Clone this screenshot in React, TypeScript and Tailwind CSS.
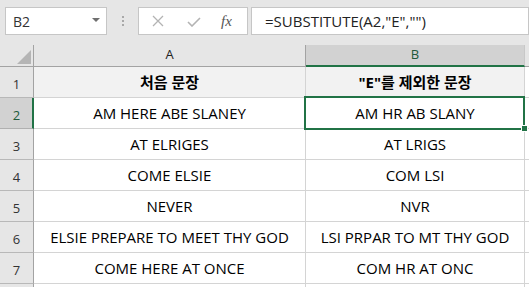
import React from 'react';

const FONT = "font-['Open_Sans','Noto_Sans_CJK_KR',sans-serif]";

type Row = { a: string; b: string };

const rows: Row[] = [
  { a: 'AM HERE ABE SLANEY', b: 'AM HR AB SLANY' },
  { a: 'AT ELRIGES', b: 'AT LRIGS' },
  { a: 'COME ELSIE', b: 'COM LSI' },
  { a: 'NEVER', b: 'NVR' },
  { a: 'ELSIE PREPARE TO MEET THY GOD', b: 'LSI PRPAR TO MT THY GOD' },
  { a: 'COME HERE AT ONCE', b: 'COM HR AT ONC' },
];

function FormulaBar() {
  return (
    <div className="flex h-[45px] items-start bg-[#e6e6e6] pt-[7px] pl-[5px]">
      <div className="flex h-[28px] w-[102px] items-center justify-between border border-[#c6c6c6] bg-white pl-[7px] pr-[6px]">
        <span className="text-[14px] text-[#333]">B2</span>
        <svg width="8" height="4" viewBox="0 0 8 4" className="mb-[2px]">
          <path d="M0 0 L8 0 L4 4 Z" fill="#6f6f6f" />
        </svg>
      </div>
      <div className="flex h-[28px] w-[31px] flex-col items-center justify-center gap-[2px]">
        <span className="h-[2px] w-[2px] bg-[#a8a8a8]" />
        <span className="h-[2px] w-[2px] bg-[#a8a8a8]" />
        <span className="h-[2px] w-[2px] bg-[#a8a8a8]" />
      </div>
      <div className="flex h-[28px] w-[110px] items-center border border-[#c6c6c6] bg-white">
        <svg width="12" height="12" viewBox="0 0 12 12" className="ml-[13px]">
          <path d="M1 1 L11 11 M11 1 L1 11" stroke="#b3b3b3" strokeWidth="1.3" />
        </svg>
        <svg width="14" height="10" viewBox="0 0 14 10" className="ml-[23px] mt-[2px]">
          <path d="M1 5 L5 9 L13 1" stroke="#b3b3b3" strokeWidth="1.6" fill="none" />
        </svg>
        <span className="ml-[20px] font-['Liberation_Serif',serif] text-[15px] italic text-[#555]">fx</span>
      </div>
      <div className="ml-[3px] flex h-[28px] flex-1 items-center border border-[#c6c6c6] bg-white pl-[13px]">
        <span className="text-[15px] text-[#222]">=SUBSTITUTE(A2,"E","")</span>
      </div>
    </div>
  );
}

function HeaderRow() {
  return (
    <div className="flex h-[22px]">
      <div className="flex w-[34px] items-end justify-end border-r border-b border-[#a3a3a3] bg-[#e6e6e6] pr-[2px] pb-[2px]">
        <svg width="14" height="14" viewBox="0 0 14 14">
          <path d="M14 0 L14 14 L0 14 Z" fill="#b5b5b5" />
        </svg>
      </div>
      <div className="flex w-[272px] items-center justify-center border-r border-b border-[#a3a3a3] bg-[#e6e6e6] pb-[2px] text-[13px] text-[#222]">
        A
      </div>
      <div className="flex w-[219px] items-center justify-center border-r border-b-2 border-r-[#c8c8c8] border-b-[#217346] bg-[#d2d2d2] pb-[1px] text-[13px] text-[#215a3a]">
        B
      </div>
      <div className="flex-1 border-b border-[#a3a3a3] bg-[#e6e6e6]" />
    </div>
  );
}

function DataRow({ n, a, b, header }: { n: number; a: string; b: string; header?: boolean }) {
  const selected = n === 2;
  const fill = header ? 'bg-[#f2f2f2]' : 'bg-white';
  const text = header ? 'text-[15px] font-bold' : 'text-[15px]';
  return (
    <div className="flex h-[31px]">
      <div
        className={
          selected
            ? 'flex w-[34px] items-end justify-center border-r-2 border-b border-r-[#217346] border-b-[#b0b0b0] bg-[#d2d2d2] pb-[3px] pl-[1px] text-[13px] text-[#215a3a]'
            : 'flex w-[34px] items-end justify-center border-r border-b border-r-[#a3a3a3] border-b-[#b8b8b8] bg-[#e6e6e6] pb-[3px] text-[13px] text-[#333]'
        }
      >
        {n}
      </div>
      <div className={`flex w-[272px] items-center justify-center border-r border-b border-[#d4d4d4] ${fill} ${text} text-black`}>
        {a}
      </div>
      <div className={`flex w-[219px] items-center justify-center border-r border-b border-[#d4d4d4] ${fill} ${text} text-black`}>
        {b}
      </div>
      <div className="flex-1 border-b border-[#d4d4d4] bg-white" />
    </div>
  );
}

export default function App() {
  return (
    <div className={`relative h-[287px] w-[529px] overflow-hidden bg-white ${FONT}`}>
      <FormulaBar />
      <HeaderRow />
      <DataRow n={1} a="처음 문장" b={'"E"를 제외한 문장'} header />
      {rows.map((r, i) => (
        <DataRow key={i} n={i + 2} a={r.a} b={r.b} />
      ))}
      <div className="flex h-[10px]">
        <div className="w-[34px] border-r border-[#a3a3a3] bg-[#e6e6e6]" />
        <div className="w-[272px] border-r border-[#d4d4d4]" />
        <div className="w-[219px] border-r border-[#d4d4d4]" />
      </div>
      {/* selection around B2 */}
      <div className="pointer-events-none absolute top-[96px] left-[304px] h-[34px] w-[221px] border-2 border-[#217346]" />
      <div className="absolute top-[125px] left-[521px] h-[7px] w-[7px] border border-white bg-[#217346]" />
    </div>
  );
}
